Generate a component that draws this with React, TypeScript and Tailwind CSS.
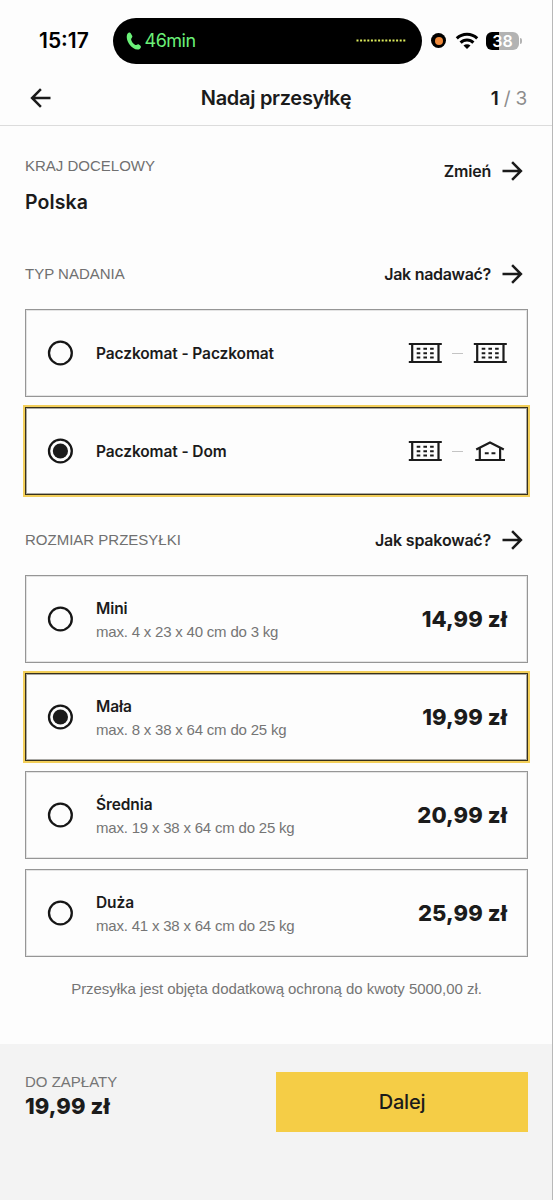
import React from 'react';

const deliveryTypes = [{
  id: 'locker-locker',
  name: 'Paczkomat - Paczkomat',
  target: 'locker'
}, {
  id: 'locker-home',
  name: 'Paczkomat - Dom',
  target: 'home'
}];

const sizes = [{
  id: 'mini',
  name: 'Mini',
  limits: 'max. 4 x 23 x 40 cm do 3 kg',
  price: '14,99 zł'
}, {
  id: 'small',
  name: 'Mała',
  limits: 'max. 8 x 38 x 64 cm do 25 kg',
  price: '19,99 zł'
}, {
  id: 'medium',
  name: 'Średnia',
  limits: 'max. 19 x 38 x 64 cm do 25 kg',
  price: '20,99 zł'
}, {
  id: 'large',
  name: 'Duża',
  limits: 'max. 41 x 38 x 64 cm do 25 kg',
  price: '25,99 zł'
}];

function ArrowIcon({ className = '' }: { className?: string }) {
  return <svg className={className} width="22" height="20" viewBox="0 0 22 20" fill="none" stroke="#1b1b1b" strokeWidth="2.5">
      <path d="M.5 10h18.500M10.100 1.200l8.800 8.800-8.800 8.800" />
    </svg>;
}

function LockerIcon() {
  return <svg width="34" height="22" viewBox="0 0 34 22" fill="none" stroke="#1b1b1b" strokeWidth="2.2">
      <path d="M.8 2h33M.8 20h33M4.200 2v18M30.500 2v18" />
      <path d="M8.700 6.800h17M8.700 11.200h17M8.700 15.600h17" strokeWidth="2" strokeDasharray="3.600 3.100" />
    </svg>;
}

function HomeIcon() {
  return <svg width="34" height="22" viewBox="0 0 34 22" fill="none" stroke="#1b1b1b" strokeWidth="2.2">
      <path d="M2.200 20h29.800M6.800 8.500v11.500M27.100 8.500v11.500M3.200 9.500L17 2.600l13.800 6.900" />
      <path d="M11.800 13.300h3.900M18.500 13.300h3.900" strokeWidth="2" />
    </svg>;
}

function Radio({ checked }: { checked: boolean }) {
  return <svg className="shrink-0" width="26" height="26" viewBox="0 0 26 26">
      <circle cx="13.400" cy="13" r="11.400" fill="none" stroke="#161616" strokeWidth="2.300" />
      {checked && <circle cx="13.400" cy="13" r="7.600" fill="#1b1b1b" />}
    </svg>;
}

function OptionCard({ checked, children }: { checked: boolean; children: React.ReactNode }) {
  return <div className={`flex h-[88px] items-center border pl-[21px] pr-5 ${checked ? 'border-[#38311c] shadow-[0_0_0_2px_#f3cf5a,inset_0_0_0_1px_#a9a8a4]' : 'border-[#969696] shadow-[inset_0_0_0_1px_#e4e4e4]'}`}>
      <Radio checked={checked} />
      {children}
    </div>;
}

function SectionHeader({ label, link, linkClass }: { label: string; link: string; linkClass: string }) {
  return <div className="flex h-5 items-center justify-between pr-1">
      <h2 className="text-[15px] leading-5 text-[#707070]">{label}</h2>
      <button className="flex items-center gap-[11px]">
        <span className={`font-['Inter',sans-serif] text-[16px] font-semibold leading-5 ${linkClass}`}>{link}</span>
        <ArrowIcon />
      </button>
    </div>;
}

function StatusBar() {
  return <div className="flex h-20 items-center pl-[39px] pt-px font-['Inter',sans-serif]">
      <span className="w-[73.5px] text-[21px] font-semibold text-black">15:17</span>
      <div className="flex h-[46px] w-[309px] items-center rounded-full bg-black pl-3 pr-4">
        <svg width="18" height="20" viewBox="0 0 18 20" fill="#6bf178">
          <path d="M2.2 3.3C3 1.6 5 .9 5.700 2.200L7.300 5.100C7.900 6.300 6 7.300 6.100 8.400C6.300 10.300 8.500 13 10.300 13.900C11.400 14.400 12.400 12.700 13.500 13.300L15.500 14.700C16.600 15.700 15.500 17.700 13.900 18.400C10.800 19.400 6.900 16.700 4.500 13.500C2.400 10.700 1 6.400 2.200 3.300Z" />
        </svg>
        <span className="ml-[2px] text-[18px] tracking-[-0.5px] text-[#6bf178]">46min</span>
        <svg className="ml-auto" width="50" height="3" viewBox="0 0 50 3">
          <path d="M.5 1.500h49" stroke="#dcec5c" strokeWidth="2" strokeDasharray="2 1.600" />
        </svg>
      </div>
      <span className="ml-[9.5px] flex h-[15px] w-[15px] items-center justify-center rounded-full bg-black">
        <span className="h-2 w-2 rounded-full bg-[#f08a3c]" />
      </span>
      <svg className="ml-[9px]" width="24" height="18" viewBox="0 0 24 18" fill="none" stroke="#000" strokeWidth="3">
        <path d="M1.800 6.400a14.500 14.500 0 0 1 20.400 0M5.600 10.600a9 9 0 0 1 12.800 0" />
        <path d="M12 17l-3.500-3.400a4.900 4.900 0 0 1 7 0z" fill="#000" stroke="none" />
      </svg>
      <span className="ml-[7px] flex h-[18px] w-[33px] items-center justify-center rounded-[6px] bg-linear-to-r from-black from-38% to-[#b3b3b3] to-38% text-[16px] font-semibold leading-[18px] text-white">38</span>
      <span className="ml-[1px] h-[6px] w-[2px] rounded-r-full bg-[#b3b3b3]" />
    </div>;
}

export default function App() {
  const selectedType = 'locker-home';
  const selectedSize = 'small';
  return <div className="flex h-[1200px] w-[553px] flex-col border-r border-[#b8b8b8] bg-[#fdfdfd] font-['Liberation_Sans',Arial,sans-serif] text-[#1b1b1b]">
      <StatusBar />
      <header className="grid h-[46px] grid-cols-[1fr_auto_1fr] items-center border-b border-[#dcdcdc] pb-[9px] pl-[29px] pr-[25px]">
        <ArrowIcon className="rotate-180" />
        <h1 className="-ml-[4px] font-['Inter',sans-serif] text-[20px] font-semibold leading-6 tracking-[-0.3px]">Nadaj przesyłkę</h1>
        <span className="pt-px text-right font-['Inter',sans-serif] text-[19px] leading-6 tracking-[-0.2px] text-[#8c8c8c]">
          <b className="font-semibold text-[#1b1b1b]">1</b> / 3
        </span>
      </header>

      <main className="flex-1 pl-[25px] pr-6 pt-[30px]">
        <section className="flex h-[60px] items-start justify-between pr-1">
          <div>
            <h2 className="text-[15px] leading-5 text-[#707070]">KRAJ DOCELOWY</h2>
            <p className="mt-[14px] font-['Inter',sans-serif] text-[19.5px] font-semibold leading-6 tracking-[0.1px]">Polska</p>
          </div>
          <button className="mt-[5px] flex items-center gap-[11px]">
            <span className="font-['Inter',sans-serif] text-[16px] font-semibold leading-5 tracking-[-0.2px]">Zmień</span>
            <ArrowIcon />
          </button>
        </section>

        <section className="mt-12">
          <SectionHeader label="TYP NADANIA" link="Jak nadawać?" linkClass="tracking-[-0.3px]" />
          <div className="mt-[25px] flex flex-col gap-[10px]">
            {deliveryTypes.map(type => <OptionCard key={type.id} checked={type.id === selectedType}>
                <span className="ml-[23px] flex-1 pt-px font-['Inter',sans-serif] text-[15.5px] font-semibold tracking-[-0.1px]">{type.name}</span>
                <LockerIcon />
                <span className="mx-[10px] h-px w-[11px] bg-[#c4c4c4]" />
                {type.target === 'locker' ? <LockerIcon /> : <HomeIcon />}
              </OptionCard>)}
          </div>
        </section>

        <section className="mt-[35px]">
          <SectionHeader label="ROZMIAR PRZESYŁKI" link="Jak spakować?" linkClass="tracking-[-0.2px]" />
          <div className="mt-[25px] flex flex-col gap-[10px]">
            {sizes.map(size => <OptionCard key={size.id} checked={size.id === selectedSize}>
                <div className="ml-[23px] flex-1 pt-[2px]">
                  <p className="font-['Inter',sans-serif] text-[15.5px] font-semibold leading-6 tracking-[-0.1px]">{size.name}</p>
                  <p className="text-[15px] leading-[22px] tracking-[-0.2px] text-[#757575]">{size.limits}</p>
                </div>
                <span className="font-['Inter',sans-serif] text-[22px] font-extrabold tracking-[0.1px]">{size.price}</span>
              </OptionCard>)}
          </div>
        </section>

        <p className="mt-[22px] text-center text-[15px] leading-5 tracking-[-0.05px] text-[#757575]">
          Przesyłka jest objęta dodatkową ochroną do kwoty 5000,00 zł.
        </p>
      </main>

      <footer className="flex h-[156px] items-start justify-between bg-[#f3f3f3] pl-[25px] pr-6 pt-7">
        <div>
          <p className="text-[15px] leading-5 text-[#757575]">DO ZAPŁATY</p>
          <p className="mt-[2px] font-['Inter',sans-serif] text-[22px] font-extrabold leading-6 tracking-[0.1px]">19,99 zł</p>
        </div>
        <button className="h-[60px] w-[252px] bg-[#f5cd46] font-['Inter',sans-serif] text-[20px] font-medium tracking-[-0.2px]">Dalej</button>
      </footer>
    </div>;
}
